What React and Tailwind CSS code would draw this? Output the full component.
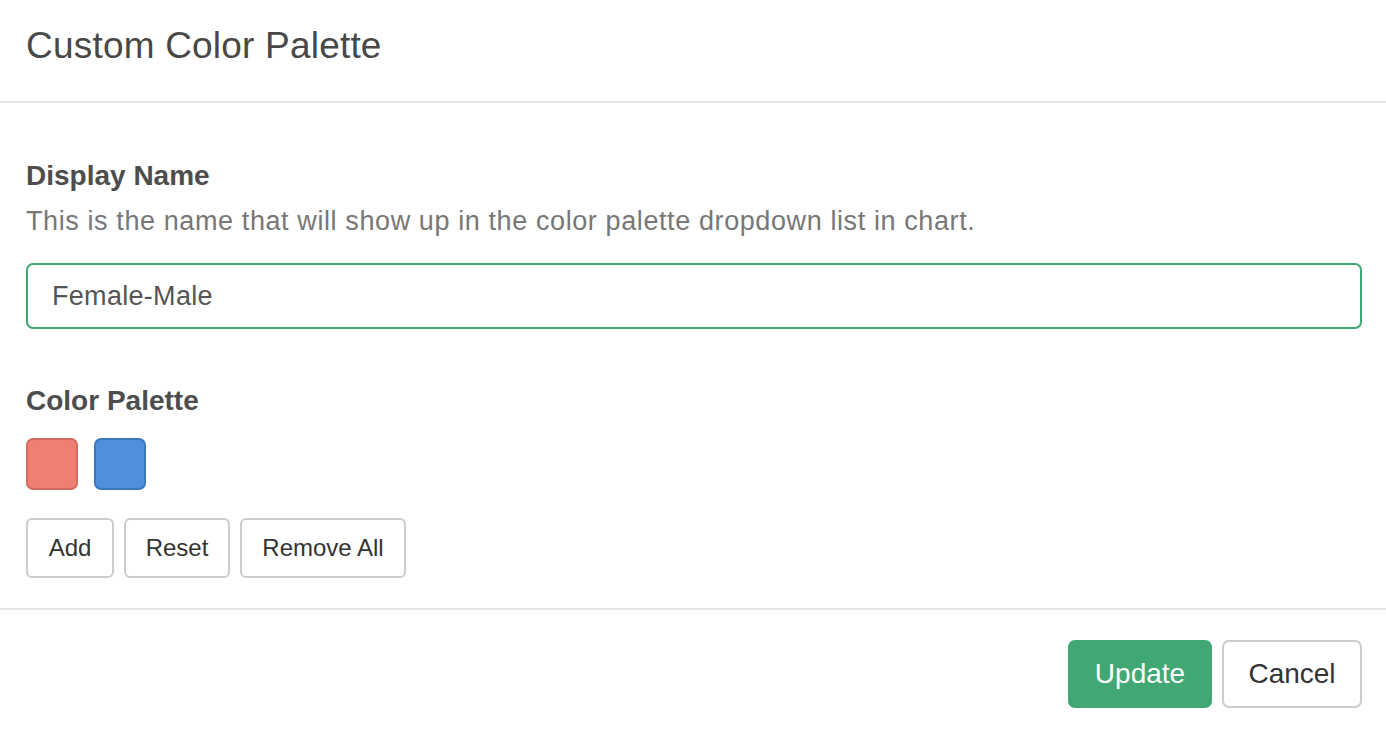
import { useState } from "react";

export default function App() {
  const [name, setName] = useState("Female-Male");
  const colors = [
    { fill: "bg-[#ef7f72]", border: "border-[#d56a5e]" },
    { fill: "bg-[#4e90db]", border: "border-[#3d77bd]" },
  ];
  const actions = [
    { label: "Add", width: "w-[88px]" },
    { label: "Reset", width: "w-[106px]" },
    { label: "Remove All", width: "w-[166px]" },
  ];

  return (
    <div className="w-full min-h-screen bg-white text-[#505050] font-['Liberation_Sans',Arial,sans-serif]">
      {/* header */}
      <div className="pt-[26px] pb-[35px] pl-[26px] pr-[24px] border-b-2 border-[#e6e6e6]">
        <h1 className="text-[37px] leading-[40px] font-normal tracking-[0.2px] text-[#484848]">Custom Color Palette</h1>
      </div>

      {/* body */}
      <div className="pl-[26px] pr-[24px] pb-[30px]">
        <label className="block mt-[57px] text-[28px] leading-[32px] font-bold text-[#4d4d4d]">Display Name</label>
        <p className="mt-[13px] text-[27px] leading-[32px] tracking-[0.6px] text-[#777777]">
          This is the name that will show up in the color palette dropdown list in chart.
        </p>
        <input
          type="text"
          value={name}
          onChange={(e) => setName(e.target.value)}
          className="mt-[26px] block w-full h-[66px] box-border border-2 border-[#41a873] rounded-[7px] pl-[24px] text-[27px] tracking-[0.3px] text-[#555555] outline-none"
        />

        <label className="block mt-[56px] text-[28px] leading-[32px] font-bold text-[#4d4d4d]">Color Palette</label>
        <div className="mt-[21px] flex gap-[16px]">
          {colors.map((c, i) => (
            <div key={i} className={`w-[52px] h-[52px] rounded-[7px] border-2 ${c.fill} ${c.border}`} />
          ))}
        </div>

        <div className="mt-[28px] flex gap-[10px]">
          {actions.map((a) => (
            <button
              key={a.label}
              className={`h-[60px] ${a.width} border-2 border-[#cccccc] rounded-[6px] bg-white text-[24px] text-[#333333]`}
            >
              {a.label}
            </button>
          ))}
        </div>
      </div>

      {/* footer */}
      <div className="border-t-2 border-[#e6e6e6] pt-[30px] pb-[24px] pl-[26px] pr-[24px] flex justify-end gap-[10px]">
        <button className="h-[68px] w-[144px] rounded-[7px] bg-[#41a873] text-white text-[28px]">Update</button>
        <button className="h-[68px] w-[140px] rounded-[7px] border-2 border-[#cccccc] bg-white text-[#333333] text-[28px]">
          Cancel
        </button>
      </div>
    </div>
  );
}
